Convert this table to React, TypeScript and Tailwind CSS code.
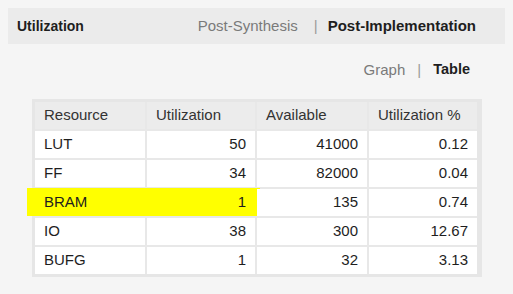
import React from 'react';

interface Row {
    resource: string;
    used: number;
    available: number;
    pct: string;
}

const rows: Row[] = [
    { resource: 'LUT', used: 50, available: 41000, pct: '0.12' },
    { resource: 'FF', used: 34, available: 82000, pct: '0.04' },
    { resource: 'BRAM', used: 1, available: 135, pct: '0.74' },
    { resource: 'IO', used: 38, available: 300, pct: '12.67' },
    { resource: 'BUFG', used: 1, available: 32, pct: '3.13' },
];

const headers = ['Resource', 'Utilization', 'Available', 'Utilization %'];

// row that gets the yellow marker
const highlighted = 'BRAM';

const App: React.FC = () => {
    return (
        <div
            className="min-h-screen w-[513px] bg-[#f5f5f5] p-2 text-[#1e1e1e]"
            style={{ fontFamily: '"Liberation Sans", Arial, sans-serif' }}
        >
            <div className="flex h-[36px] items-center justify-between bg-[#ebebeb] pl-[9px] pr-[29px]">
                <span className="text-[14px] font-bold">Utilization</span>
                <div className="flex items-center text-[15px]">
                    <span className="text-[#7a7a7a]">Post-Synthesis</span>
                    <span className="ml-[16px] mr-[10px] text-[#9a9a9a]">|</span>
                    <span className="text-[15px] font-bold">Post-Implementation</span>
                </div>
            </div>

            <div className="mt-[15px] flex items-center justify-end pr-[35px] text-[15px]">
                <span className="text-[#7a7a7a]">Graph</span>
                <span className="mx-[12px] text-[#9a9a9a]">|</span>
                <span className="text-[14.5px] font-bold">Table</span>
            </div>

            <div className="ml-[24px] mt-[17px] w-[450px] bg-[#e6e6e6] pb-[3px] pl-[3px] pr-[5px] pt-[3px]">
                <div className="relative grid grid-cols-[110px_108px_110px_108px] gap-[2px] bg-[#e8e8e8] text-[15px]">
                    {headers.map((h) => (
                        <div
                            key={h}
                            className="relative z-10 flex h-[27px] items-center bg-[#ececec] pl-[9px] text-[#333]"
                        >
                            {h}
                        </div>
                    ))}
                    {rows.map((r) => {
                        const mark = r.resource === highlighted;
                        const lead = mark ? 'bg-transparent' : 'bg-white';
                        return (
                            <React.Fragment key={r.resource}>
                                <div className={`relative z-10 flex h-[27px] items-center pl-[9px] ${lead}`}>
                                    {r.resource}
                                </div>
                                <div className={`relative z-10 flex h-[27px] items-center justify-end pr-[9px] ${lead}`}>
                                    {r.used}
                                </div>
                                <div className="relative z-10 flex h-[27px] items-center justify-end bg-white pr-[9px]">
                                    {r.available}
                                </div>
                                <div className="relative z-10 flex h-[27px] items-center justify-end bg-white pr-[9px]">
                                    {r.pct}
                                </div>
                            </React.Fragment>
                        );
                    })}
                    {/* marker sits under the cells of the highlighted row */}
                    <div className="absolute left-[-8px] top-[86px] z-0 h-[28px] w-[233px] bg-[#ffff00]" />
                </div>
            </div>
        </div>
    );
};

export default App;
